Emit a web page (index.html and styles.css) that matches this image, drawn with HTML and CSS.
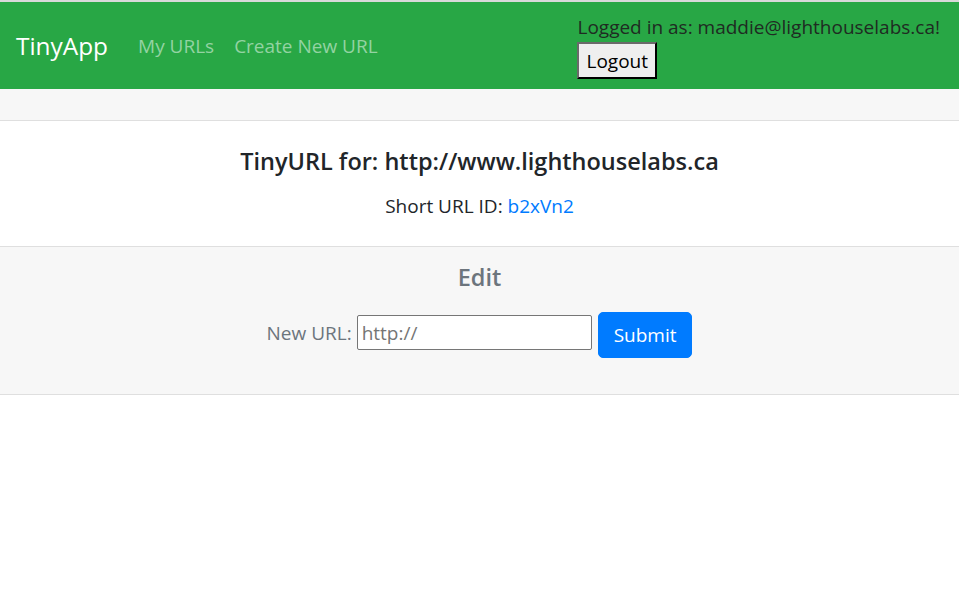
FILE: index.html
```html
<!DOCTYPE html>
<html lang="en">
<head>
<meta charset="utf-8">
<title>TinyApp</title>
<link rel="stylesheet" href="styles.css">
</head>
<body>
<nav class="navbar">
  <a class="brand" href="#">TinyApp</a>
  <ul class="nav">
    <li><a class="nav-link" href="#">My URLs</a></li>
    <li><a class="nav-link" href="#">Create New URL</a></li>
  </ul>
  <div class="user">
    <div class="user-text">Logged in as: maddie@lighthouselabs.ca!</div>
    <button class="logout" type="button">Logout</button>
  </div>
</nav>
<main class="card">
  <div class="card-header"></div>
  <div class="card-body">
    <h5 class="card-title">TinyURL for: http://www.lighthouselabs.ca</h5>
    <p class="card-text">Short URL ID: <a href="#">b2xVn2</a></p>
  </div>
  <div class="card-footer">
    <h3 class="edit-title">Edit</h3>
    <form class="edit-form">
      <label for="newurl">New URL:</label>
      <input id="newurl" type="text" placeholder="http://">
      <button class="btn-primary" type="submit">Submit</button>
    </form>
  </div>
</main>
</body>
</html>
```
FILE: styles.css
```css
* { box-sizing: border-box; }
html, body { margin: 0; padding: 0; }
body {
  font-family: "Open Sans", "Noto Sans", sans-serif;
  font-size: 19px;
  line-height: 30px;
  color: #212529;
  background: #fff;
  border-top: 2px solid #d9d9d9;
}
a { text-decoration: none; }
.navbar {
  display: flex;
  align-items: center;
  background: #28a745;
  padding: 10px 19px 10px 16px;
}
.brand {
  color: #fff;
  font-size: 24.4px;
  line-height: 37px;
  margin-right: 20px;
}
.nav {
  display: flex;
  list-style: none;
  margin: 0;
  padding: 0;
}
.nav-link {
  display: block;
  padding: 0 10px;
  color: #93d3a2;
}
.user {
  margin-left: auto;
  display: flex;
  flex-direction: column;
  align-items: flex-start;
}
.user-text { color: #1f2b22; }
.logout {
  font-family: inherit;
  font-size: 19px;
  line-height: 30px;
  height: 37px;
  padding: 1px 7px;
  color: #000;
  background: #efefef;
  border-style: solid;
  border-width: 2px;
  border-color: #6a6a6a #000 #000 #6a6a6a;
}
.card { display: flex; flex-direction: column; }
.card-header {
  height: 32px;
  background: #f7f7f7;
  border-bottom: 1px solid #dfdfdf;
}
.card-body {
  padding: 25px;
  text-align: center;
}
.card-title {
  margin: 0 0 15px;
  font-size: 23.5px;
  line-height: 30px;
  font-weight: 600;
}
.card-text { margin: 0; }
.card-text a { color: #007bff; }
.card-footer {
  background: #f7f7f7;
  border-top: 1px solid #dfdfdf;
  border-bottom: 1px solid #dfdfdf;
  padding: 15px 25px 15px;
  text-align: center;
  color: #6c757d;
}
.edit-title {
  margin: 0 0 20px;
  font-size: 23.5px;
  line-height: 30px;
  font-weight: 600;
}
.edit-form {
  margin: 0 0 21px;
  display: flex;
  justify-content: center;
  align-items: flex-start;
}
.edit-form label { margin: 6px 5px 0 0; }
.edit-form input {
  margin-top: 3px;
  font-family: inherit;
  font-size: 19px;
  width: 235px;
  height: 35px;
  padding: 1px 4px;
  border: 1px solid #767676;
  border-radius: 2px;
  background: #fff;
  color: #212529;
}
.edit-form input::placeholder { color: #757575; }
.btn-primary {
  margin-left: 6px;
  font-family: inherit;
  font-size: 19px;
  line-height: 30px;
  padding: 7px 15px;
  height: 46px;
  color: #fff;
  background: #007bff;
  border: 1px solid #007bff;
  border-radius: 5px;
}
```
